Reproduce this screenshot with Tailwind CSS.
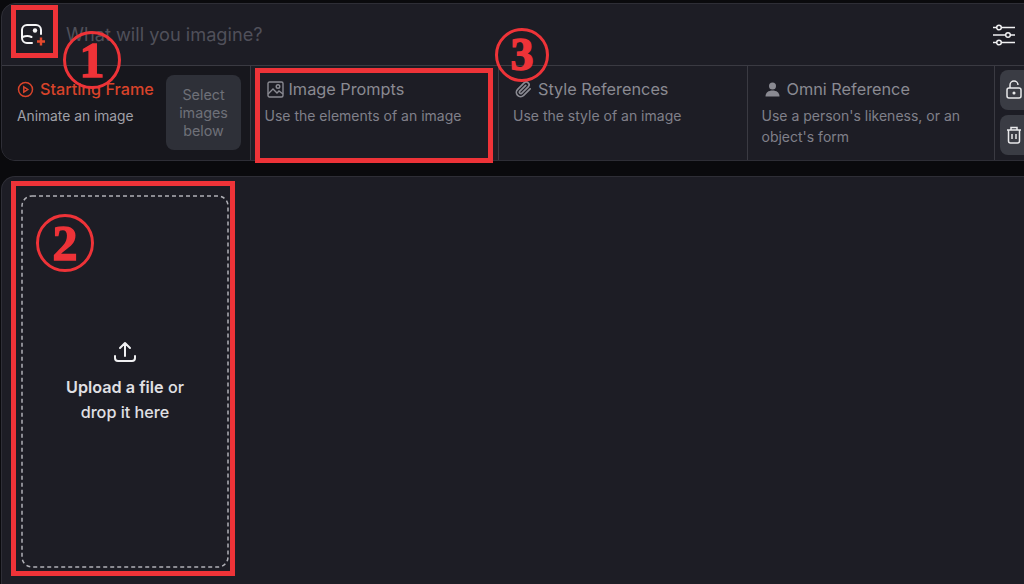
<!DOCTYPE html>
<html lang="en">
<head>
    <meta charset="UTF-8">
    <meta name="viewport" content="width=device-width, initial-scale=1.0">
    <title>Image Prompts</title>
    <script src="https://cdn.jsdelivr.net/npm/@tailwindcss/browser@4"></script>
</head>
<body class="relative w-[1024px] h-[584px] overflow-hidden bg-[#0a0a0d] font-['Inter','Liberation_Sans',sans-serif]">
    <div class="flex flex-col pt-[3px] pl-px h-full">
        <!-- prompt panel -->
        <section class="h-[158px] w-[1040px] rounded-l-[14px] bg-[#1d1d25] border border-[#2e2e36] flex flex-col overflow-hidden">
            <div class="h-[62px] flex items-center border-b border-[#3a3a42]">
                <div class="w-[62px] flex justify-center">
                    <svg width="26" height="26" viewBox="0 0 26 26" fill="none">
                        <path d="M12 21H7A5 5 0 0 1 2 16V8A5 5 0 0 1 7 3h9A5 5 0 0 1 21 8V12" stroke="#f4f4f6" stroke-width="2" stroke-linecap="round"/>
                        <path d="M2.500 15c3.500-1.500 6-1.500 9 0" stroke="#f4f4f6" stroke-width="2" stroke-linecap="round"/>
                        <circle cx="15" cy="8.500" r="2.200" fill="#f4f4f6"/>
                        <path d="M21 15.500v8M17 19.500h8" stroke="#e5492d" stroke-width="2.400"/>
                    </svg>
                </div>
                <span class="text-[18.200px] text-[#50505a] ml-[2px]">What will you imagine?</span>
                <div class="ml-auto w-[62px] pl-[14px]">
                    <svg width="24" height="24" viewBox="0 0 24 24" fill="none" stroke="#f0f0f2" stroke-width="1.500">
                        <path d="M1 4.500h4M9 4.500h14M1 12h13M18 12h5M1 19.500h4M9 19.500h14"/>
                        <circle cx="7" cy="4.500" r="2.300"/><circle cx="16" cy="12" r="2.300"/><circle cx="7" cy="19.500" r="2.300"/>
                    </svg>
                </div>
            </div>
            <div class="flex-1 flex">
                <div class="w-[250px] flex pl-[15px] pt-[12px] border-r border-[#3a3a42] bg-[#17171d]">
                    <div class="w-[149px]">
                        <div class="flex items-center gap-[6px] h-[22px]">
                            <svg width="17" height="17" viewBox="0 0 17 17" fill="none" stroke="#d8432a" stroke-width="1.500"><circle cx="8.500" cy="8.500" r="7"/><path d="M6.800 5.800v5.400l4-2.700z"/></svg>
                            <span class="text-[16.200px] text-[#d8432a] font-medium whitespace-nowrap">Starting Frame</span>
                        </div>
                        <p class="text-[13.800px] text-[#a0a0a8] mt-[6px] whitespace-nowrap">Animate an image</p>
                    </div>
                    <div class="w-[75px] h-[75px] -mt-[3px] rounded-lg bg-[#2e3038] text-[#6e7078] text-[14.300px] leading-[18px] text-center flex items-center justify-center">Select images below</div>
                </div>
                <div class="w-[250px] pl-[14px] pt-[12px] border-r border-[#3a3a42]">
                    <div class="flex items-center gap-[5px] h-[22px] pl-[2px]">
                        <svg width="17" height="17" viewBox="0 0 17 17" fill="none" stroke="#8a8a92" stroke-width="1.400"><rect x="1" y="1" width="15" height="15" rx="1.500"/><path d="M1 13l5-5 4 4 2-2 4 3"/><circle cx="11" cy="5.500" r="1.800"/></svg>
                        <span class="text-[16.300px] text-[#8a8a92] whitespace-nowrap">Image Prompts</span>
                    </div>
                    <p class="text-[14px] text-[#80808a] mt-[5px] whitespace-nowrap">Use the elements of an image</p>
                </div>
                <div class="w-[250px] pl-[14px] pt-[12px] border-r border-[#3a3a42]">
                    <div class="flex items-center gap-[6px] h-[22px] pl-[2px]">
                        <svg width="17" height="17" viewBox="0 0 24 24" fill="none" stroke="#8a8a92" stroke-width="2.400" stroke-linecap="round"><path d="M21.400 11.100l-9.200 9.200a6 6 0 0 1-8.500-8.500l9.200-9.200a4 4 0 0 1 5.700 5.700l-9.200 9.200a2 2 0 0 1-2.800-2.800l8.500-8.500"/></svg>
                        <span class="text-[16.300px] text-[#8a8a92] whitespace-nowrap">Style References</span>
                    </div>
                    <p class="text-[14px] text-[#80808a] mt-[5px] whitespace-nowrap">Use the style of an image</p>
                </div>
                <div class="w-[249px] pl-[14px] pt-[12px] border-r border-[#3a3a42]">
                    <div class="flex items-center gap-[6px] h-[22px] pl-[2px]">
                        <svg width="17" height="17" viewBox="0 0 17 17" fill="#8a8a92"><circle cx="8.500" cy="5" r="3.500"/><path d="M1.500 15.500c0-4 3-6 7-6s7 2 7 6z"/></svg>
                        <span class="text-[16.300px] text-[#8a8a92] whitespace-nowrap">Omni Reference</span>
                    </div>
                    <p class="text-[14px] text-[#80808a] mt-[5px] leading-[21px] w-[225px]">Use a person's likeness, or an object's form</p>
                </div>
                <div class="pl-[5px] pt-[4px] flex flex-col gap-[5px]">
                    <div class="w-[40px] h-[40px] rounded-lg bg-[#3a3c44] pl-[6px] flex items-center">
                        <svg width="16" height="20" viewBox="0 0 16 20" fill="none" stroke="#e8e8ea" stroke-width="1.500"><rect x="1" y="8" width="14" height="10" rx="2"/><path d="M4 8V5a4 4 0 0 1 8 0"/><circle cx="8" cy="13" r=".8"/></svg>
                    </div>
                    <div class="w-[40px] h-[40px] rounded-lg bg-[#3a3c44] pl-[6px] flex items-center">
                        <svg width="16" height="18" viewBox="0 0 16 18" fill="none" stroke="#e8e8ea" stroke-width="1.500"><path d="M1 4h14M5 4V1.500h6V4M2.500 4v11a2 2 0 0 0 2 2h7a2 2 0 0 0 2-2V4M6 8v5M10 8v5"/></svg>
                    </div>
                </div>
            </div>
        </section>
        <!-- upload panel -->
        <section class="mt-[15px] flex-1 w-[1040px] rounded-tl-[14px] bg-[#1d1d25] border-t border-l border-[#2e2e36] pl-[19px] pt-[18px]">
            <div class="relative w-[208px] h-[373px] flex flex-col items-center pt-[145px]">
                <svg class="absolute inset-0" width="208" height="373" fill="none"><rect x="1" y="1" width="206" height="371" rx="10" stroke="#b0b0b6" stroke-width="1.500" stroke-dasharray="4 3"/></svg>
                <svg width="24" height="24" viewBox="0 0 24 24" fill="none" stroke="#f0f0f2" stroke-width="2" stroke-linecap="round" stroke-linejoin="round"><path d="M12 16V3M7 8l5-5 5 5M2 16v2a3 3 0 0 0 3 3h14a3 3 0 0 0 3-3v-2"/></svg>
                <p class="mt-[11px] text-[16.200px] leading-[25px] text-center text-[#e0e0e4] font-medium"><span class="font-semibold">Upload a file</span> or<br>drop it here</p>
            </div>
        </section>
    </div>

    <!-- annotations -->
    <div class="absolute left-[11px] top-[5px] w-[47px] h-[53px] border-[5px] border-[#ee3338]"></div>
    <div class="absolute left-[255px] top-[68px] w-[238px] h-[95px] border-[5px] border-[#ee3338]"></div>
    <div class="absolute left-[11px] top-[181px] w-[224px] h-[395px] border-[5px] border-[#ee3338]"></div>
    <div class="absolute left-[63px] top-[31px] w-[58px] h-[58px] rounded-full border-[3px] border-[#ee3338] flex items-center justify-center font-['Liberation_Serif',serif] font-bold text-[50px] leading-none text-[#ee3338] [-webkit-text-stroke:1.500px_#ee3338]">1</div>
    <div class="absolute left-[36px] top-[214px] w-[58px] h-[58px] rounded-full border-[3px] border-[#ee3338] flex items-center justify-center font-['Liberation_Serif',serif] font-bold text-[50px] leading-none text-[#ee3338] [-webkit-text-stroke:1.500px_#ee3338]">2</div>
    <div class="absolute left-[495px] top-[28px] w-[54px] h-[54px] rounded-full border-[3px] border-[#ee3338] flex items-center justify-center font-['Liberation_Serif',serif] font-bold text-[46px] leading-none text-[#ee3338] [-webkit-text-stroke:1.500px_#ee3338]">3</div>
</body>
</html>
